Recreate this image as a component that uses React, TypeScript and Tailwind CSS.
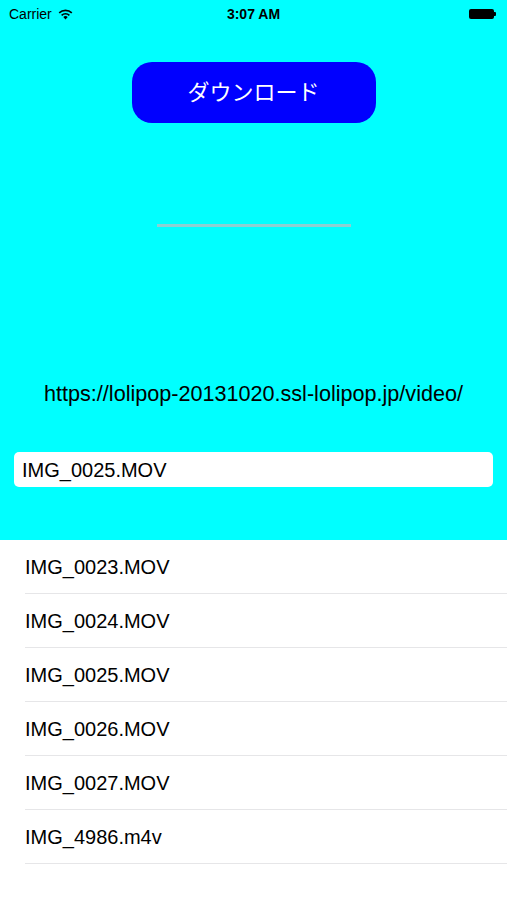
import React from "react";

const files = [
  "IMG_0023.MOV",
  "IMG_0024.MOV",
  "IMG_0025.MOV",
  "IMG_0026.MOV",
  "IMG_0027.MOV",
  "IMG_4986.m4v",
];

function StatusBar() {
  return (
    <div className="h-[28px] flex items-center justify-between px-[9px] text-[14px] text-black">
      <div className="flex items-center gap-[6px] w-[120px]">
        <span>Carrier</span>
        <svg width="15" height="11" viewBox="0 0 15 11">
          <path d="M7.5 10.5 L5.3 8.1 A3.2 3.2 0 0 1 9.7 8.1 Z" fill="black" />
          <path d="M3.6 6.4 A5.6 5.6 0 0 1 11.4 6.4" stroke="black" strokeWidth="1.6" fill="none" />
          <path d="M1.2 3.9 A9 9 0 0 1 13.8 3.9" stroke="black" strokeWidth="1.6" fill="none" />
        </svg>
      </div>
      <span className="font-bold">3:07 AM</span>
      <div className="flex items-center justify-end w-[120px] pr-[2px]">
        <div className="w-[25px] h-[10px] bg-black rounded-[2px]" />
        <div className="w-[2px] h-[4px] bg-black rounded-r-[1px]" />
      </div>
    </div>
  );
}

export default function App() {
  return (
    <div
      className="w-[507px] h-[900px] bg-white overflow-hidden"
      style={{ fontFamily: '"Liberation Sans", "Noto Sans CJK JP", sans-serif' }}
    >
      {/* Top area */}
      <div className="bg-[#00ffff] h-[540px] flex flex-col">
        <StatusBar />
        <div className="flex justify-center pt-[34px]">
          <button className="w-[244px] h-[61px] bg-[#0000ff] rounded-[20px] text-white text-[22px] flex items-center justify-center">
            ダウンロード
          </button>
        </div>
        <div className="flex justify-center pt-[101px]">
          <div className="w-[194px] h-[3px] bg-[#8ccfd2]" />
        </div>
        <div className="text-center text-black text-[21.6px] pt-[154px] leading-[26px]">
          https://lolipop-20131020.ssl-lolipop.jp/video/
        </div>
        <div className="px-[14px] pt-[45px]">
          <div className="h-[35px] bg-white rounded-[5px] flex items-center px-[8px] text-[20px] text-black">
            IMG_0025.MOV
          </div>
        </div>
      </div>

      {/* File list */}
      <div className="flex flex-col">
        {files.map((f) => (
          <div key={f} className="pl-[25px]">
            <div className="h-[54px] flex items-center border-b border-[#e6e6e8] text-[20px] text-black">
              {f}
            </div>
          </div>
        ))}
      </div>
    </div>
  );
}
